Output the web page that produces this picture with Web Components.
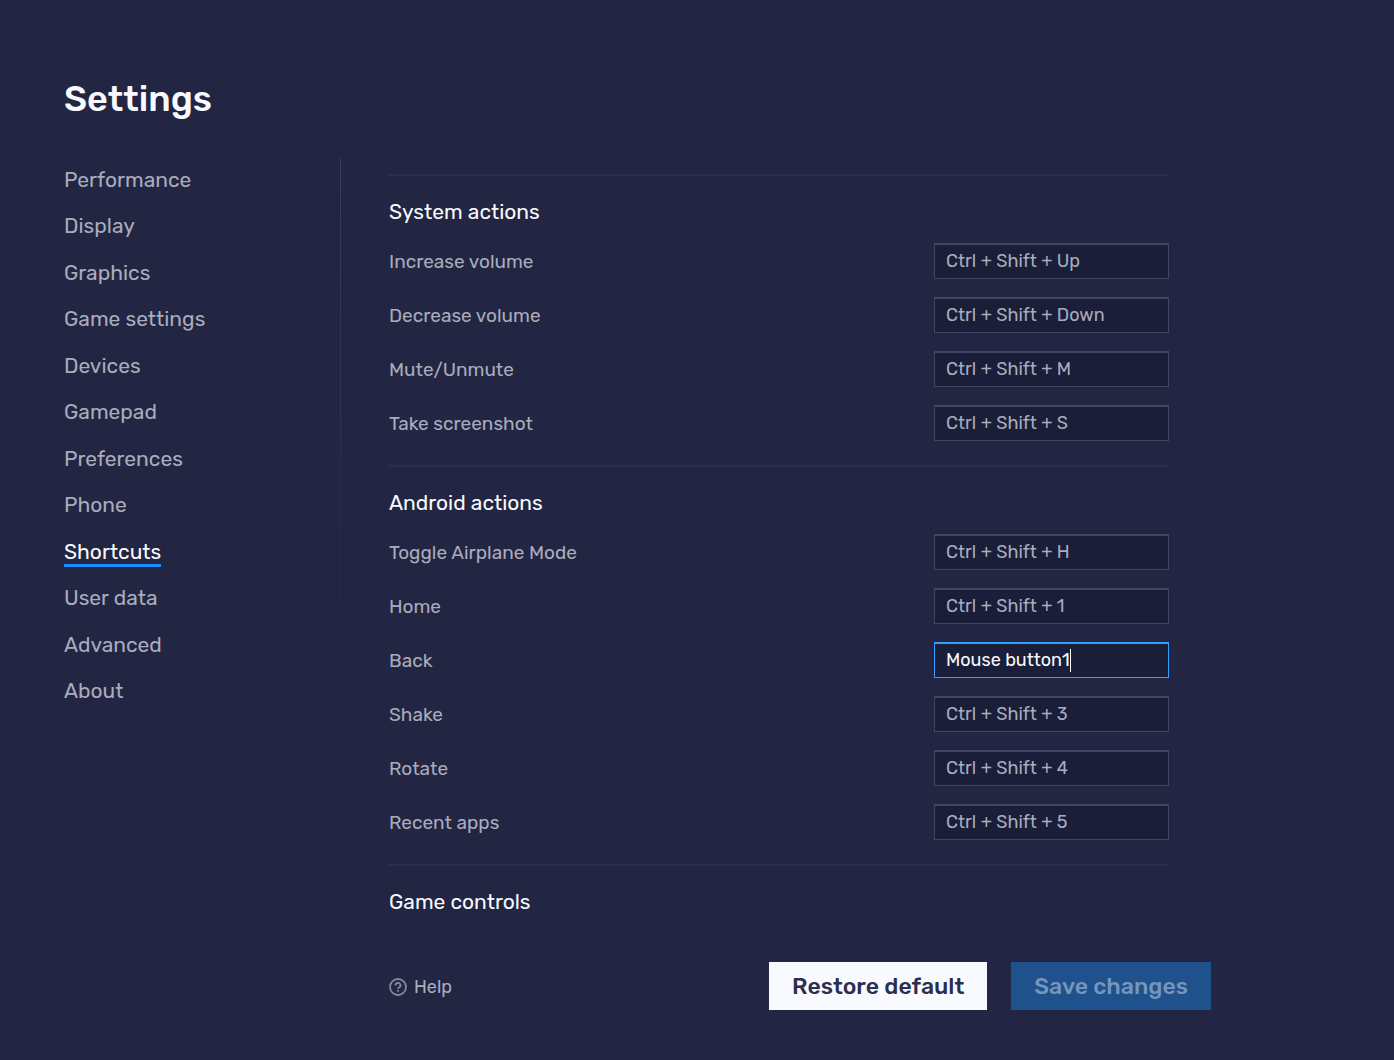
<!DOCTYPE html>
<html lang="en">
<head>
<meta charset="utf-8">
<title>Settings</title>
<style>
  html, body { margin: 0; height: 100%; }
  body {
    --bg: #232642;
    --text: #aaacbe;
    --bright: #f8faff;
    --line: #2c2f50;
    --field: #1b1e38;
    --field-line: #434663;
    --accent: #1a90ff;
    --focus: #2fa0ff;
    background: var(--bg);
    color: var(--text);
    font-family: Rubik, Roboto, sans-serif;
  }
</style>
</head>
<body>
<settings-page>
  <settings-nav slot="nav" active="Shortcuts"></settings-nav>
  <shortcut-section heading="System actions">
    <shortcut-row label="Increase volume" value="Ctrl + Shift + Up"></shortcut-row>
    <shortcut-row label="Decrease volume" value="Ctrl + Shift + Down"></shortcut-row>
    <shortcut-row label="Mute/Unmute" value="Ctrl + Shift + M"></shortcut-row>
    <shortcut-row label="Take screenshot" value="Ctrl + Shift + S"></shortcut-row>
  </shortcut-section>
  <shortcut-section heading="Android actions">
    <shortcut-row label="Toggle Airplane Mode" value="Ctrl + Shift + H"></shortcut-row>
    <shortcut-row label="Home" value="Ctrl + Shift + 1"></shortcut-row>
    <shortcut-row label="Back" value="Mouse button1" editing></shortcut-row>
    <shortcut-row label="Shake" value="Ctrl + Shift + 3"></shortcut-row>
    <shortcut-row label="Rotate" value="Ctrl + Shift + 4"></shortcut-row>
    <shortcut-row label="Recent apps" value="Ctrl + Shift + 5"></shortcut-row>
  </shortcut-section>
  <shortcut-section heading="Game controls"></shortcut-section>
  <settings-footer slot="footer"></settings-footer>
</settings-page>

<script>
class SettingsPage extends HTMLElement {
  constructor() {
    super();
    this.attachShadow({ mode: 'open' }).innerHTML = `
      <style>
        :host { display: flex; flex-direction: column; box-sizing: border-box; height: 100%; min-height: 800px; padding: 74px 183px 50px 64px; }
        h1 { margin: 0 0 34px; font-size: 36px; line-height: 50px; font-weight: 500; color: var(--bright); }
        .columns { display: flex; flex: 1; min-height: 0; }
        aside { flex: none; display: flex; width: 277px; }
        .rule { align-self: flex-start; width: 1px; height: 520px; background: linear-gradient(#3a3d5a, var(--bg)); }
        main { flex: 1; min-width: 0; display: flex; flex-direction: column; padding-left: 48px; }
        .list { flex: 1; min-height: 0; overflow: hidden; padding: 16px 42px 0 0; }
      </style>
      <h1>Settings</h1>
      <div class="columns">
        <aside><slot name="nav"></slot><div class="rule"></div></aside>
        <main><div class="list"><slot></slot></div><slot name="footer"></slot></main>
      </div>`;
  }
}

class SettingsNav extends HTMLElement {
  connectedCallback() {
    const active = this.getAttribute('active');
    const names = ['Performance', 'Display', 'Graphics', 'Game settings', 'Devices', 'Gamepad',
      'Preferences', 'Phone', 'Shortcuts', 'User data', 'Advanced', 'About'];
    this.attachShadow({ mode: 'open' }).innerHTML = `
      <style>
        :host { display: block; flex: 1; }
        nav { display: grid; grid-auto-rows: 1fr; min-height: 558px; align-items: center; justify-items: start; }
        a { color: var(--text); font-size: 21px; line-height: 24px; border-bottom: 3px solid transparent; text-decoration: none; }
        a[aria-current] { color: var(--bright); border-color: var(--accent); }
      </style>
      <nav aria-label="Settings">${names.map(n =>
        `<a href="#"${n === active ? ' aria-current="page"' : ''}>${n}</a>`).join('')}</nav>`;
  }
}

class ShortcutSection extends HTMLElement {
  connectedCallback() {
    this.attachShadow({ mode: 'open' }).innerHTML = `
      <style>
        :host { display: block; border-top: 2px solid var(--line); padding: 22px 0 24px; }
        h2 { margin: 0 0 17px; font-size: 21px; line-height: 28px; font-weight: 400; color: var(--bright); }
        .rows { display: flex; flex-direction: column; gap: 18px; }
      </style>
      <h2>${this.getAttribute('heading')}</h2>
      <div class="rows"><slot></slot></div>`;
  }
}

class ShortcutRow extends HTMLElement {
  connectedCallback() {
    const editing = this.hasAttribute('editing');
    this.attachShadow({ mode: 'open' }).innerHTML = `
      <style>
        :host { display: flex; align-items: center; justify-content: space-between; }
        label { padding-top: 2px; font-size: 19px; line-height: 24px; }
        .field { display: flex; align-items: center; box-sizing: border-box; width: 235px; height: 36px; padding-left: 11px;
          background: var(--field); border: 1px solid var(--field-line); border-top-width: 2px; }
        input { flex: 1; min-width: 0; padding: 0 0 2px; border: 0; outline: 0; background: none; color: inherit; font: 18px/24px Rubik, Roboto, sans-serif; }
        :host([editing]) .field { border-color: var(--focus); color: var(--bright); }
        :host([editing]) input { flex: none; field-sizing: content; caret-color: transparent; }
        .caret { width: 1px; height: 23px; background: var(--bright); }
      </style>
      <label for="keys">${this.getAttribute('label')}</label>
      <div class="field"><input id="keys" type="text" value="${this.getAttribute('value')}">${editing ? '<span class="caret"></span>' : ''}</div>`;
  }
}

class SettingsFooter extends HTMLElement {
  constructor() {
    super();
    this.attachShadow({ mode: 'open' }).innerHTML = `
      <style>
        :host { display: flex; align-items: center; gap: 24px; }
        a { display: flex; align-items: center; gap: 7px; margin-right: auto; padding-top: 2px; color: var(--text); font-size: 18px; line-height: 24px; text-decoration: none; }
        svg { width: 18px; height: 18px; color: #85879d; }
        button { height: 48px; padding: 0 23px; border: 0; font: 500 23px/48px Rubik, Roboto, sans-serif; background: var(--bright); color: #2b2e4e; }
        button:disabled { background: #1f518d; color: #7595bd; }
      </style>
      <a href="#"><svg viewBox="0 0 18 18" fill="none" stroke="currentColor" stroke-width="1.8" aria-hidden="true">
        <circle cx="9" cy="9" r="8"/><path d="M6.5 7.4a2.5 2.3 0 1 1 3.8 1.8c-.9.5-1.3.8-1.3 1.8"/><path d="M9 12v1.8"/></svg>Help</a>
      <button type="button">Restore default</button>
      <button type="button" disabled>Save changes</button>`;
  }
}

customElements.define('settings-page', SettingsPage);
customElements.define('settings-nav', SettingsNav);
customElements.define('shortcut-section', ShortcutSection);
customElements.define('shortcut-row', ShortcutRow);
customElements.define('settings-footer', SettingsFooter);
</script>
</body>
</html>
